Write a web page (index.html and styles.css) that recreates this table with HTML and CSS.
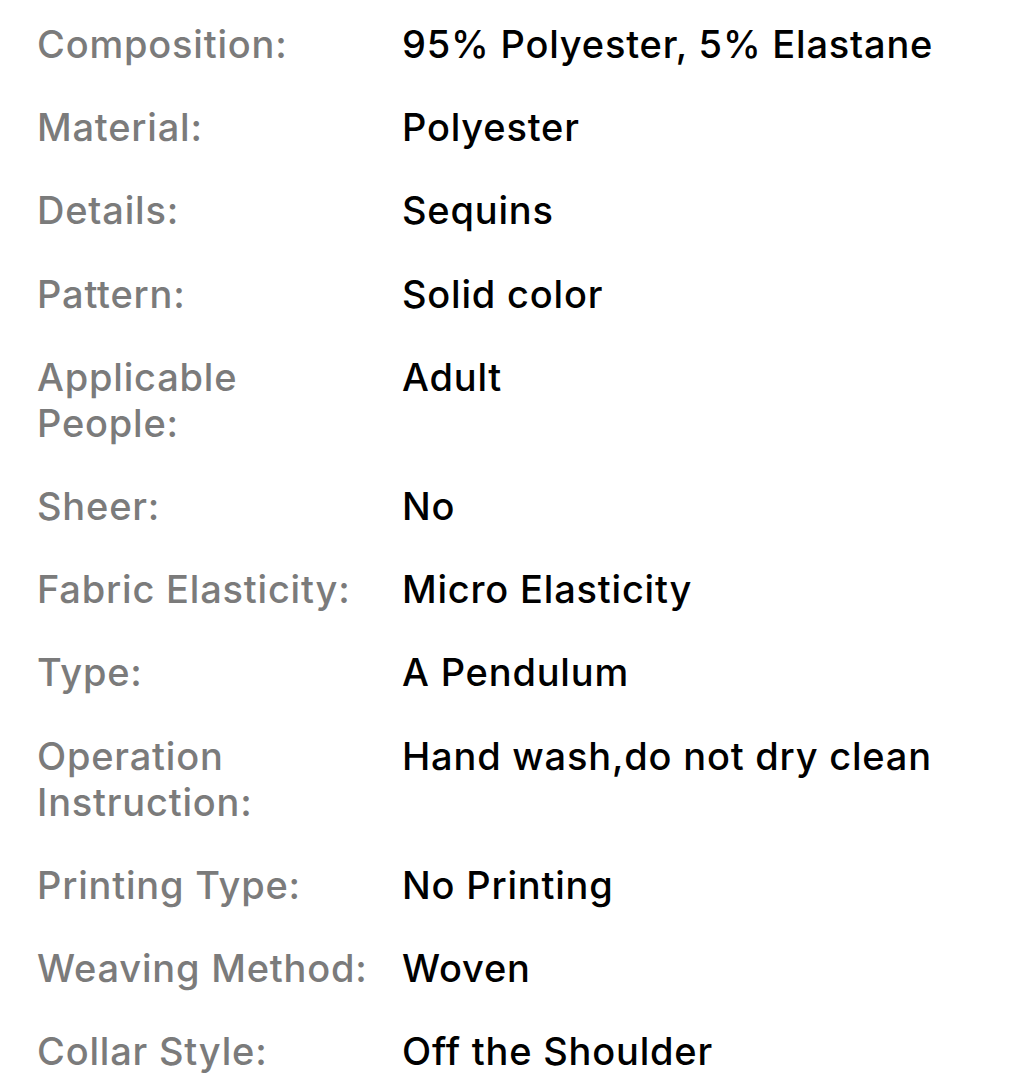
FILE: index.html
```html
<!DOCTYPE html>
<html>
<head>
<meta charset="utf-8">
<link rel="stylesheet" href="styles.css">
</head>
<body>
<div class="specs">
  <div class="label">Composition:</div><div class="value">95% Polyester, 5% Elastane</div>
  <div class="label">Material:</div><div class="value">Polyester</div>
  <div class="label">Details:</div><div class="value">Sequins</div>
  <div class="label">Pattern:</div><div class="value">Solid color</div>
  <div class="label">Applicable<br>People:</div><div class="value">Adult</div>
  <div class="label">Sheer:</div><div class="value">No</div>
  <div class="label">Fabric Elasticity:</div><div class="value">Micro Elasticity</div>
  <div class="label">Type:</div><div class="value">A Pendulum</div>
  <div class="label">Operation<br>Instruction:</div><div class="value">Hand wash,do not dry clean</div>
  <div class="label">Printing Type:</div><div class="value">No Printing</div>
  <div class="label">Weaving Method:</div><div class="value">Woven</div>
  <div class="label">Collar Style:</div><div class="value">Off the Shoulder</div>
</div>
</body>
</html>
```
FILE: styles.css
```css
html, body {
  margin: 0;
  padding: 0;
  background: #ffffff;
}
body {
  font-family: Inter, "Noto Sans", "Liberation Sans", sans-serif;
  font-size: 38px;
  font-weight: 500;
  line-height: 46px;
  letter-spacing: 0.8px;
}
.specs {
  display: grid;
  grid-template-columns: 365px 1fr;
  row-gap: 37.2px;
  padding: 21px 0 0 37px;
}
.label {
  color: #7b7b7b;
}
.value {
  color: #000000;
}
```
